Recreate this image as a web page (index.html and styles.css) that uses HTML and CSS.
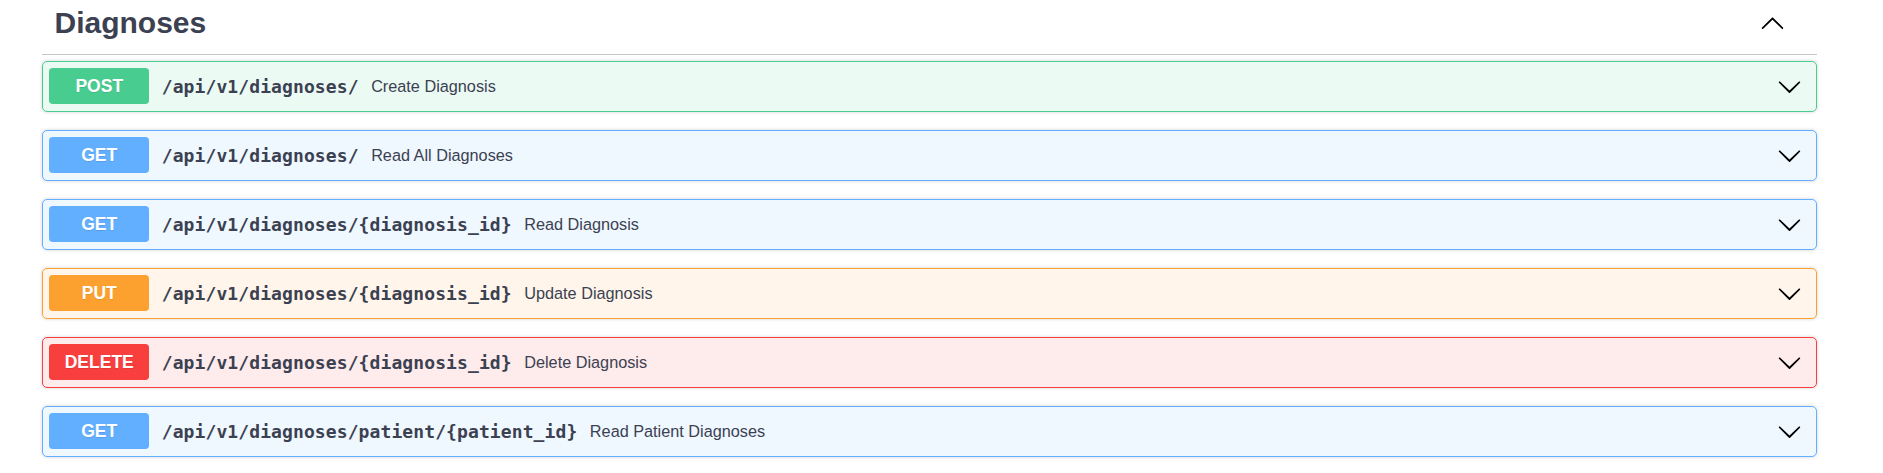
FILE: index.html
```html
<!DOCTYPE html>
<html lang="en">
<head>
<meta charset="utf-8">
<title>Diagnoses</title>
<link rel="stylesheet" href="styles.css">
</head>
<body>
<div class="wrapper">
  <h3 class="tag">
    <span class="tag-name">Diagnoses</span>
    <svg class="arrow" viewBox="0 0 20 20" width="25" height="25" aria-hidden="true"><path d="M17.418 14.908c.272.268.709.268.979 0s.271-.701 0-.969l-7.908-7.83c-.27-.268-.707-.268-.979 0l-7.908 7.83c-.27.268-.27.701 0 .969.271.268.709.268.979 0L10 7.767l7.418 7.141z"/></svg>
  </h3>

  <div class="op op-post">
    <span class="method">POST</span>
    <span class="path">/api/v1/diagnoses/</span>
    <span class="desc">Create Diagnosis</span>
    <svg class="arrow" viewBox="0 0 20 20" width="25" height="25" aria-hidden="true"><path d="M17.418 6.109c.272-.268.709-.268.979 0s.271.701 0 .969l-7.908 7.83c-.27.268-.707.268-.979 0l-7.908-7.83c-.27-.268-.27-.701 0-.969.271-.268.709-.268.979 0L10 13.25l7.418-7.141z"/></svg>
  </div>

  <div class="op op-get">
    <span class="method">GET</span>
    <span class="path">/api/v1/diagnoses/</span>
    <span class="desc">Read All Diagnoses</span>
    <svg class="arrow" viewBox="0 0 20 20" width="25" height="25" aria-hidden="true"><path d="M17.418 6.109c.272-.268.709-.268.979 0s.271.701 0 .969l-7.908 7.83c-.27.268-.707.268-.979 0l-7.908-7.830c-.27-.268-.27-.701 0-.969.271-.268.709-.268.979 0L10 13.25l7.418-7.141z"/></svg>
  </div>

  <div class="op op-get">
    <span class="method">GET</span>
    <span class="path">/api/v1/diagnoses/{diagnosis_id}</span>
    <span class="desc">Read Diagnosis</span>
    <svg class="arrow" viewBox="0 0 20 20" width="25" height="25" aria-hidden="true"><path d="M17.418 6.109c.272-.268.709-.268.979 0s.271.701 0 .969l-7.908 7.83c-.27.268-.707.268-.979 0l-7.908-7.83c-.27-.268-.27-.701 0-.969.271-.268.709-.268.979 0L10 13.25l7.418-7.141z"/></svg>
  </div>

  <div class="op op-put">
    <span class="method">PUT</span>
    <span class="path">/api/v1/diagnoses/{diagnosis_id}</span>
    <span class="desc">Update Diagnosis</span>
    <svg class="arrow" viewBox="0 0 20 20" width="25" height="25" aria-hidden="true"><path d="M17.418 6.109c.272-.268.709-.268.979 0s.271.701 0 .969l-7.908 7.83c-.27.268-.707.268-.979 0l-7.908-7.83c-.27-.268-.27-.701 0-.969.271-.268.709-.268.979 0L10 13.25l7.418-7.141z"/></svg>
  </div>

  <div class="op op-delete">
    <span class="method">DELETE</span>
    <span class="path">/api/v1/diagnoses/{diagnosis_id}</span>
    <span class="desc">Delete Diagnosis</span>
    <svg class="arrow" viewBox="0 0 20 20" width="25" height="25" aria-hidden="true"><path d="M17.418 6.109c.272-.268.709-.268.979 0s.271.701 0 .969l-7.908 7.83c-.27.268-.707.268-.979 0l-7.908-7.83c-.27-.268-.27-.701 0-.969.271-.268.709-.268.979 0L10 13.25l7.418-7.141z"/></svg>
  </div>

  <div class="op op-get">
    <span class="method">GET</span>
    <span class="path">/api/v1/diagnoses/patient/{patient_id}</span>
    <span class="desc">Read Patient Diagnoses</span>
    <svg class="arrow" viewBox="0 0 20 20" width="25" height="25" aria-hidden="true"><path d="M17.418 6.109c.272-.268.709-.268.979 0s.271.701 0 .969l-7.908 7.83c-.27.268-.707.268-.979 0l-7.908-7.83c-.27-.268-.27-.701 0-.969.271-.268.709-.268.979 0L10 13.25l7.418-7.141z"/></svg>
  </div>
</div>
</body>
</html>
```

FILE: styles.css
```css
html, body {
  margin: 0;
  padding: 0;
  background: #ffffff;
}

body {
  font-family: "Liberation Sans", Arial, sans-serif;
  color: #3b4151;
  overflow: hidden;
}

.wrapper {
  width: 1775px;
  margin-left: 42px;
}

.tag {
  display: flex;
  align-items: center;
  margin: -6.4px 0 6px;
  padding: 12px 25px 14.4px 12.5px;
  font-size: 30px;
  line-height: 34px;
  font-weight: bold;
  color: #3b4151;
  border-bottom: 1px solid rgba(59, 65, 81, 0.3);
}

.tag-name {
  flex: 1 1 auto;
}

.tag .arrow {
  margin-right: 7px;
}

.arrow {
  flex: 0 0 auto;
  fill: #000;
}

.op {
  display: flex;
  align-items: center;
  margin-bottom: 18.5px;
  padding: 6.25px;
  border: 1px solid #000;
  border-radius: 5px;
  box-shadow: 0 0 3.75px rgba(0, 0, 0, 0.19);
}

.op .arrow {
  margin-right: 7.5px;
}

.method {
  flex: 0 0 auto;
  min-width: 100px;
  padding: 7.5px 0;
  border-radius: 3.75px;
  font-size: 17.5px;
  line-height: 21px;
  font-weight: bold;
  text-align: center;
  color: #fff;
  text-shadow: 0 1px 0 rgba(0, 0, 0, 0.1);
}

.path {
  flex: 0 0 auto;
  padding: 0 12.5px;
  font-family: "DejaVu Sans Mono", "Liberation Mono", monospace;
  font-size: 18px;
  letter-spacing: 0.1px;
  font-weight: bold;
  color: #3b4151;
}

.desc {
  flex: 1 1 auto;
  font-size: 16.25px;
  color: #3b4151;
}

.op-post { background: rgba(73, 204, 144, 0.1); border-color: #49cc90; }
.op-post .method { background: #49cc90; }

.op-get { background: rgba(97, 175, 254, 0.1); border-color: #61affe; }
.op-get .method { background: #61affe; }

.op-put { background: rgba(252, 161, 48, 0.1); border-color: #fca130; }
.op-put .method { background: #fca130; }

.op-delete { background: rgba(249, 62, 62, 0.1); border-color: #f93e3e; }
.op-delete .method { background: #f93e3e; }
```
